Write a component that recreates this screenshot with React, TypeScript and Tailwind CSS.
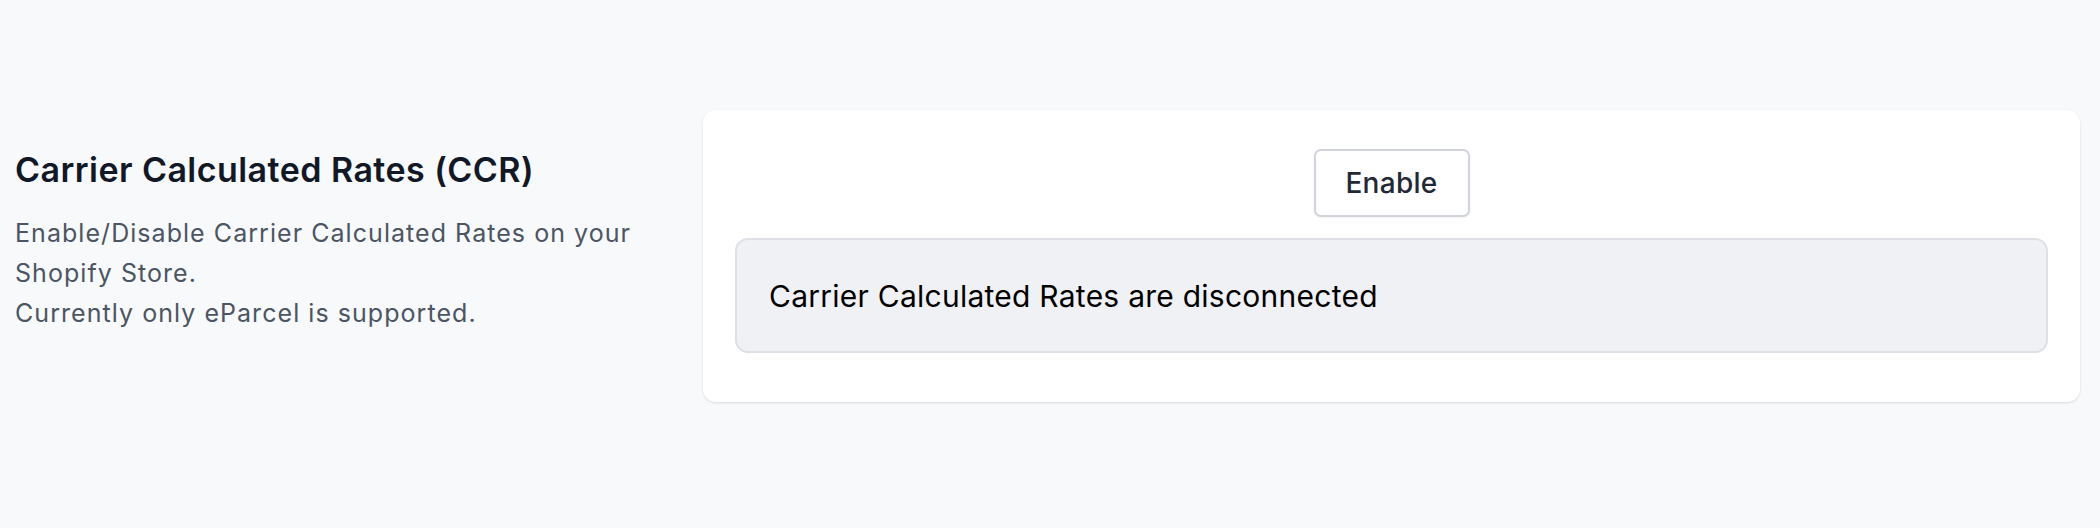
const App = () => {
  return (
    <div className="min-h-[528px] w-full bg-[#f8f9fa] font-['Inter','Noto_Sans',sans-serif]">
      <div className="flex pl-[15px] pr-[20px] pt-[110px]">
        <div className="w-[688px] shrink-0 pt-[40px] pr-6">
          <h2 className="text-[34px] font-semibold leading-[40px] tracking-[0.45px] text-[#111827]">
            Carrier Calculated Rates (CCR)
          </h2>
          <p className="mt-[23px] text-[25px] leading-[40px] tracking-[1.05px] text-[#4b5563]">
            Enable/Disable Carrier Calculated Rates on your
            <br />
            Shopify Store.
            <br />
            Currently only eParcel is supported.
          </p>
        </div>

        <div className="flex-1 rounded-[13px] bg-white px-8 pb-[49px] pt-[39px] shadow-[0_1px_3px_rgba(0,0,0,0.09),0_1px_2px_rgba(0,0,0,0.04)]">
          <div className="flex justify-center">
            <button
              type="button"
              className="h-[68px] w-[156px] rounded-[7px] border-2 border-[#d1d4da] bg-white text-[28px] font-medium tracking-[0.3px] text-[#1f2937] shadow-[0_1px_2px_rgba(0,0,0,0.05)]"
            >
              Enable
            </button>
          </div>
          <div className="mt-[21px] flex h-[115px] items-center rounded-[13px] border-2 border-[#dfe0e5] bg-[#f0f1f5] px-8">
            <p className="text-[30px] leading-9 tracking-[0.25px] text-black">
              Carrier Calculated Rates are disconnected
            </p>
          </div>
        </div>
      </div>
    </div>
  );
};

export default App;
